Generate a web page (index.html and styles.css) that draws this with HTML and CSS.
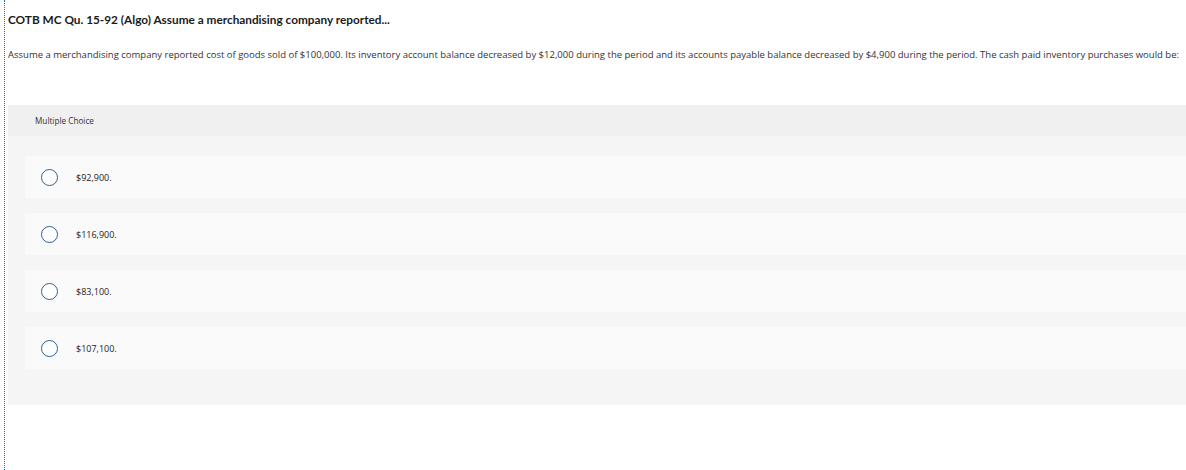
FILE: index.html
```html
<!DOCTYPE html>
<html>
<head>
<meta charset="utf-8">
<link rel="stylesheet" href="styles.css">
</head>
<body>
<div class="frame">
  <h1 class="title">COTB MC Qu. 15-92 (Algo) Assume a merchandising company reported...</h1>
  <p class="question">Assume a merchandising company reported cost of goods sold of $100,000. Its inventory account balance decreased by $12,000 during the period and its accounts payable balance decreased by $4,900 during the period. The cash paid inventory purchases would be:</p>
  <div class="mc">
    <div class="mc-head">Multiple Choice</div>
    <div class="options">
      <div class="option"><span class="radio"></span><span class="label">$92,900.</span></div>
      <div class="option"><span class="radio"></span><span class="label">$116,900.</span></div>
      <div class="option"><span class="radio"></span><span class="label">$83,100.</span></div>
      <div class="option"><span class="radio"></span><span class="label">$107,100.</span></div>
    </div>
  </div>
</div>
</body>
</html>
```
FILE: styles.css
```css
html, body {
  margin: 0;
  padding: 0;
  background: #fff;
}
body {
  font-family: "Open Sans", "Liberation Sans", sans-serif;
  color: #222;
}
.frame {
  margin-left: 4px;
  border-left: 1px dotted #1a6fd6;
  padding-left: 3px;
  min-height: 470px;
  box-sizing: border-box;
  padding-top: 13px;
}
.title {
  margin: 0;
  font-family: "Lato", "Open Sans", sans-serif;
  font-size: 11.8px;
  font-weight: 700;
  color: #1b1b1b;
  line-height: 14px;
}
.question {
  margin: 22px 0 0 0;
  font-size: 9.5px;
  line-height: 12px;
  color: #333;
}
.mc {
  margin-top: 44px;
  background: #f5f5f5;
}
.mc-head {
  background: #f0f0f0;
  height: 31px;
  display: flex;
  align-items: center;
  padding-left: 27px;
  font-size: 8.2px;
  color: #333;
}
.options {
  display: flex;
  flex-direction: column;
  gap: 15px;
  padding: 20px 0 36px 17px;
}
.option {
  height: 42px;
  background: #fafafa;
  display: flex;
  align-items: center;
  padding-left: 16px;
}
.radio {
  width: 15px;
  height: 15px;
  border: 1.5px solid #2d5f93;
  border-radius: 50%;
  background: #fff;
  flex: none;
}
.label {
  margin-left: 18px;
  font-size: 9px;
  color: #222;
}
```
